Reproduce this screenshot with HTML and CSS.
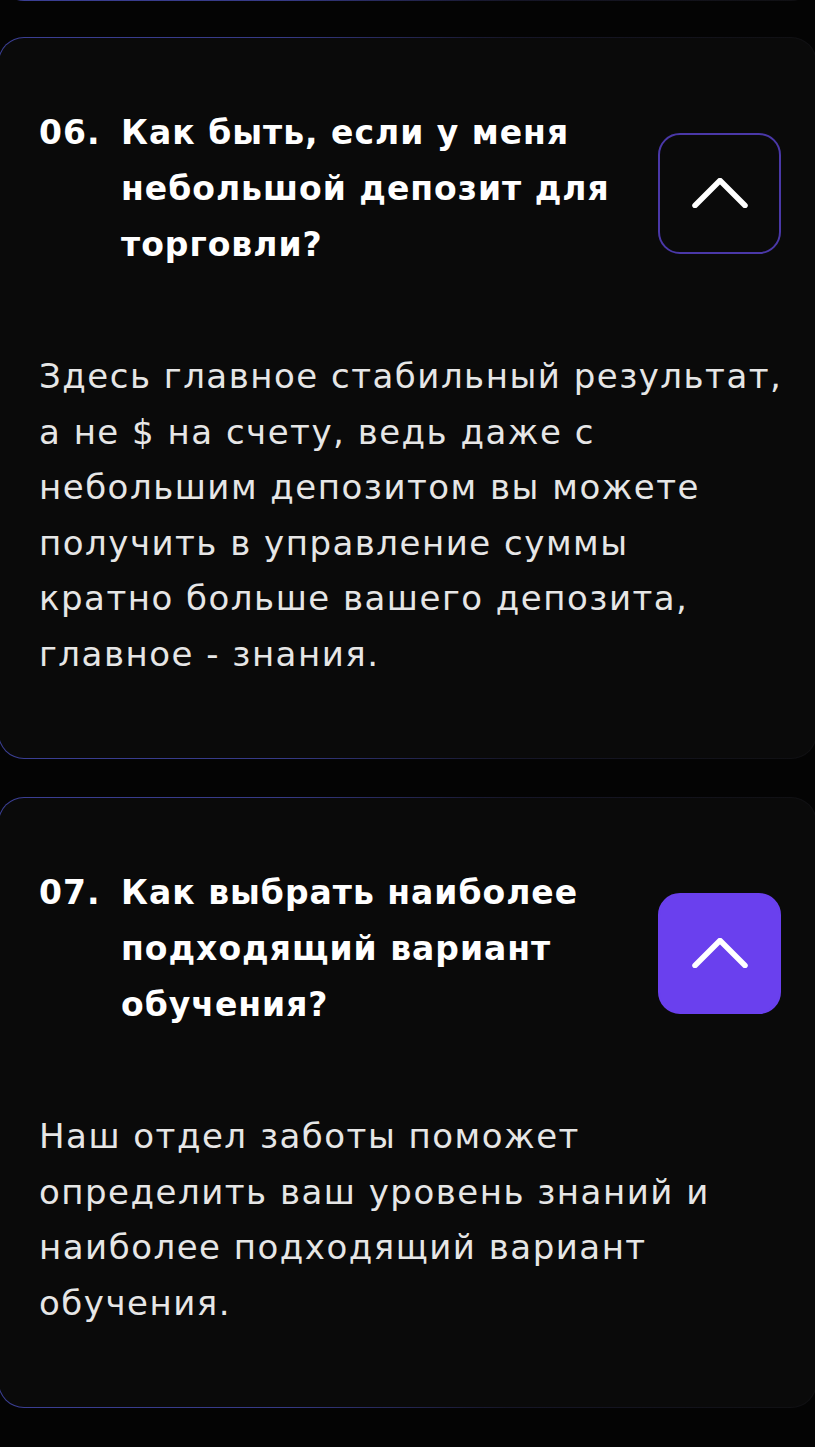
FILE: index.html
```html
<!DOCTYPE html>
<html lang="ru">
<head>
<meta charset="utf-8">
<title>FAQ</title>
<link rel="stylesheet" href="styles.css">
</head>
<body>
<main class="faq">
  <div class="card card--prev"></div>

  <section class="card">
    <div class="faq-head">
      <span class="num">06.</span>
      <h3 class="question">Как быть, если у меня небольшой депозит для торговли?</h3>
      <button class="toggle toggle--outline" aria-label="Свернуть">
        <svg viewBox="0 0 60 30" width="60" height="30"><polyline points="5,27.5 30,2.5 55,27.5"/></svg>
      </button>
    </div>
    <p class="answer">Здесь главное стабильный результат, а не $ на счету, ведь даже с небольшим депозитом вы можете получить в управление суммы кратно&nbsp;больше вашего депозита, главное - знания.</p>
  </section>

  <section class="card">
    <div class="faq-head">
      <span class="num">07.</span>
      <h3 class="question">Как выбрать наиболее подходящий вариант обучения?</h3>
      <button class="toggle toggle--filled" aria-label="Свернуть">
        <svg viewBox="0 0 60 30" width="60" height="30"><polyline points="5,27.5 30,2.5 55,27.5"/></svg>
      </button>
    </div>
    <p class="answer">Наш отдел заботы поможет определить ваш уровень знаний и наиболее подходящий вариант обучения.</p>
  </section>
</main>
</body>
</html>
```

FILE: styles.css
```css
html, body {
  margin: 0;
  padding: 0;
  background: #040404;
}

body {
  width: 815px;
  height: 1447px;
  overflow: hidden;
  font-family: "DejaVu Sans", "Noto Sans", sans-serif;
  color: #fff;
}

.faq {
  display: flex;
  flex-direction: column;
  gap: 38px;
  margin-left: -2px;
  width: 819px;
}

.card {
  border: 1.5px solid transparent;
  border-radius: 26px;
  background:
    linear-gradient(#0a0a0a, #0a0a0a) padding-box,
    linear-gradient(90deg, #3b3f95 0%, #363a86 35%, rgba(45,45,85,0.45) 62%, rgba(28,28,32,0.5) 100%) border-box;
  padding: 67px 35px 76px 40px;
}

.card--prev {
  margin-top: -200px;
  margin-bottom: -2px;
  padding: 0;
  min-height: 201px;
  box-sizing: border-box;
}

.faq-head {
  display: flex;
  align-items: center;
}

.num {
  flex: 0 0 82px;
  align-self: flex-start;
  font-size: 33px;
  line-height: 56px;
  font-weight: 700;
  letter-spacing: 1px;
}

.question {
  flex: 1;
  margin: 0;
  font-size: 33px;
  line-height: 56px;
  font-weight: 700;
  letter-spacing: 1px;
  padding-right: 30px;
}

.toggle {
  flex: 0 0 auto;
  width: 123px;
  height: 121px;
  margin-top: 8px;
  border-radius: 22px;
  display: flex;
  align-items: center;
  justify-content: center;
  padding: 0;
  box-sizing: border-box;
  cursor: pointer;
}

.toggle svg {
  display: block;
}

.toggle polyline {
  fill: none;
  stroke: #fff;
  stroke-width: 5.5;
  stroke-linecap: round;
  stroke-linejoin: round;
}

.toggle--outline {
  background: #0a0a0a;
  border: 2px solid #4a38a8;
}

.toggle--filled {
  background: #6a40ee;
  border: 2px solid #6a40ee;
}

.answer {
  margin: 76px -20px 0 0;
  font-family: "DejaVu Sans", sans-serif;
  font-size: 34px;
  line-height: 55.5px;
  letter-spacing: 1.5px;
  color: #e6e6e6;
}
```
